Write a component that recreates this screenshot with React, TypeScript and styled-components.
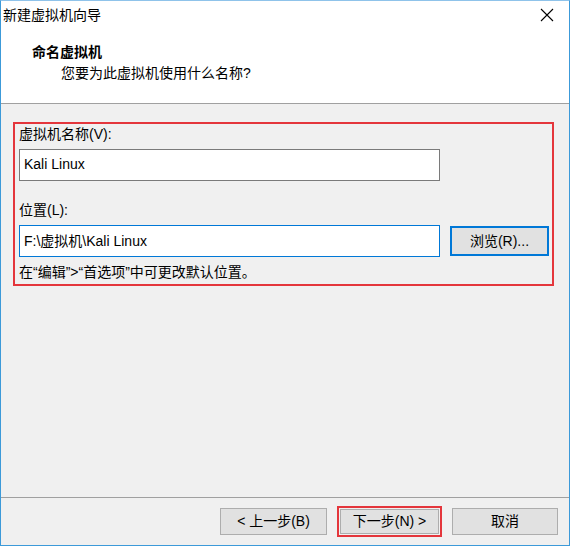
import React from "react";
import styled, { createGlobalStyle } from "styled-components";

const FONT = `"Liberation Sans", "Noto Sans CJK SC", sans-serif`;

const Global = createGlobalStyle`
  html, body { margin: 0; padding: 0; background: #ffffff; overflow: hidden; }
  * { box-sizing: border-box; }
  body { font-family: ${FONT}; }
`;

const Window = styled.div`
  width: 570px;
  height: 546px;
  display: flex;
  flex-direction: column;
  border: 1px solid #3c9ad9;
  border-top-color: #8fc3ea;
  background: #f0f0f0;
  color: #000;
  font-size: 14px;
  line-height: 20px;
`;

const TitleBar = styled.div`
  height: 30px;
  background: #ffffff;
  display: flex;
  align-items: center;
  justify-content: space-between;
  padding: 0 15px 0 2px;
`;

const TitleText = styled.div`
  font-size: 14px;
  line-height: 20px;
  margin-top: -2px;
`;

const CloseIcon = styled.svg`
  width: 14px;
  height: 14px;
  margin-top: -2px;
`;

const Header = styled.div`
  height: 73px;
  background: #ffffff;
  border-bottom: 1px solid #a0a0a0;
  padding: 11px 0 0 31px;
  display: flex;
  flex-direction: column;
`;

const HeaderTitle = styled.div`
  font-weight: bold;
  font-size: 14px;
  line-height: 20px;
`;

const HeaderSub = styled.div`
  font-size: 14px;
  line-height: 20px;
  margin-top: 1px;
  padding-left: 29px;
`;

const Body = styled.div`
  flex: 1;
  padding: 18px 15px 0 12px;
  display: flex;
  flex-direction: column;
`;

const Highlight = styled.div<{ $pad?: string }>`
  border: 2px solid #e4363c;
  padding: ${(p) => p.$pad ?? "0"};
  display: flex;
  flex-direction: column;
`;

const Label = styled.div<{ $top?: number }>`
  margin-top: ${(p) => p.$top ?? 0}px;
  line-height: 20px;
`;

const Row = styled.div`
  display: flex;
  align-items: center;
  gap: 10px;
  margin-top: 5px;
`;

const TextBox = styled.input<{ $focused?: boolean }>`
  width: 421px;
  height: 32px;
  margin: 0;
  border: 1px solid ${(p) => (p.$focused ? "#0078d7" : "#7a7a7a")};
  background: #ffffff;
  padding: 0 0 2px 4px;
  font-family: ${FONT};
  font-size: 14px;
  color: #000;
  outline: none;
`;

const Button = styled.button<{ $primary?: boolean; $w: number; $h: number }>`
  width: ${(p) => p.$w}px;
  height: ${(p) => p.$h}px;
  margin: 0;
  padding: 0;
  background: #e1e1e1;
  border: ${(p) => (p.$primary ? "2px solid #0078d7" : "1px solid #adadad")};
  font-family: ${FONT};
  font-size: 14px;
  line-height: 20px;
  color: #000;
  display: flex;
  align-items: center;
  justify-content: center;
`;

const Hint = styled.div`
  margin-top: 5px;
  line-height: 20px;
  padding-bottom: 2px;
`;

const Footer = styled.div`
  height: 48px;
  border-top: 1px solid #a0a0a0;
  display: flex;
  align-items: center;
  justify-content: flex-end;
  gap: 10px;
  padding: 0 11px 1px 0;
`;

const NextHighlight = styled.div`
  border: 2px solid #e4363c;
  padding: 1px;
  display: flex;
`;

export default function App() {
  return (
    <>
      <Global />
      <Window>
        <TitleBar>
          <TitleText>新建虚拟机向导</TitleText>
          <CloseIcon viewBox="0 0 14 14">
            <path d="M1 1 L13 13 M13 1 L1 13" stroke="#000" strokeWidth="1.1" fill="none" />
          </CloseIcon>
        </TitleBar>
        <Header>
          <HeaderTitle>命名虚拟机</HeaderTitle>
          <HeaderSub>您要为此虚拟机使用什么名称?</HeaderSub>
        </Header>
        <Body>
          <Highlight $pad="0 3px 0 4px">
            <Label>虚拟机名称(V):</Label>
            <Row>
              <TextBox defaultValue="Kali Linux" readOnly />
            </Row>
            <Label $top={19}>位置(L):</Label>
            <Row>
              <TextBox $focused defaultValue="F:\虚拟机\Kali Linux" readOnly />
              <Button $primary $w={99} $h={30}>浏览(R)...</Button>
            </Row>
            <Hint>在“编辑”&gt;“首选项”中可更改默认位置。</Hint>
          </Highlight>
        </Body>
        <Footer>
          <Button $w={107} $h={27}>&lt; 上一步(B)</Button>
          <NextHighlight>
            <Button $w={99} $h={25}>下一步(N) &gt;</Button>
          </NextHighlight>
          <Button $w={106} $h={27}>取消</Button>
        </Footer>
      </Window>
    </>
  );
}
